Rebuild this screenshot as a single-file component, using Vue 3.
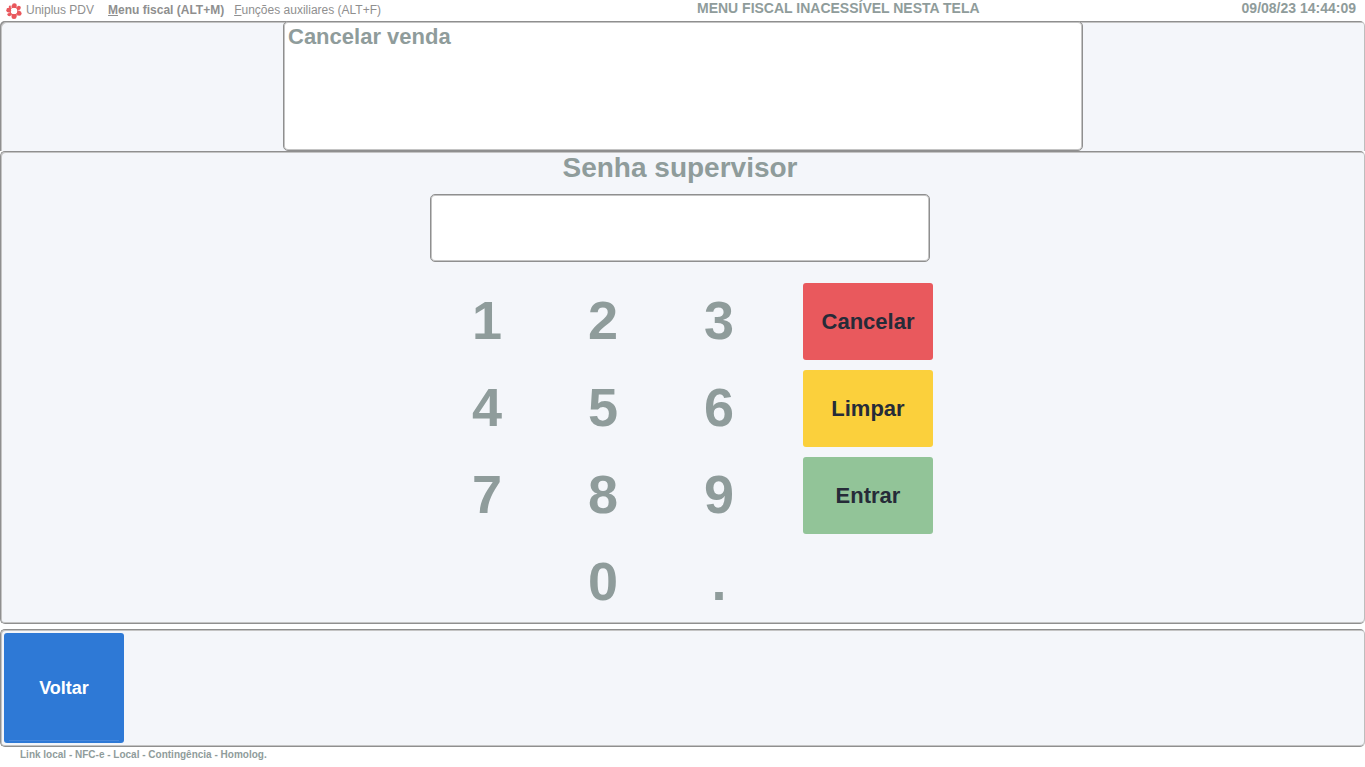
<script setup>
import { ref } from 'vue'

const password = ref('')
const keys = ['1', '2', '3', '4', '5', '6', '7', '8', '9', '0', '.']

function press(key) {
  password.value += key
}

function clear() {
  password.value = ''
}
</script>

<template>
  <div class="page">
    <header class="topbar">
      <nav class="menu">
        <svg class="logo" viewBox="0 0 16 16" aria-hidden="true">
          <circle cx="8" cy="8" r="4.6" fill="none" stroke="#e9575c" stroke-width="2.6" />
          <g fill="#e9575c">
            <circle cx="8.4" cy="2.6" r="2.4" />
            <circle cx="12.8" cy="4.8" r="2" />
            <circle cx="13.2" cy="10.4" r="2.4" />
            <circle cx="8" cy="13.4" r="2.5" />
            <circle cx="3.4" cy="11.2" r="2" />
            <circle cx="2.7" cy="7.2" r="2.4" />
            <circle cx="4.2" cy="3.8" r="1.4" />
          </g>
          <path
            d="M5.4 5.2 5 1.8M10.8 4.4l.6-2.8M12.2 7.4l3.4.2M10.8 11.6l1 2.8M5.4 11.8l-.8 2.8M3.6 9.6l-3 .6"
            stroke="#ffffff"
            stroke-width="0.7"
          />
        </svg>
        <span class="brand">Uniplus PDV</span>
        <a class="item strong" href="#"><u>M</u>enu fiscal (ALT+M)</a>
        <a class="item" href="#"><u>F</u>unções auxiliares (ALT+F)</a>
      </nav>
      <span class="notice">MENU FISCAL INACESSÍVEL NESTA TELA</span>
      <time class="clock" datetime="2023-08-09T14:44:09">09/08/23 14:44:09</time>
    </header>

    <section class="panel head">
      <h1 class="title">Cancelar venda</h1>
    </section>

    <main class="panel body">
      <label class="label" for="password">Senha supervisor</label>
      <input id="password" v-model="password" class="field" type="password" />
      <div class="pad">
        <div class="keys">
          <button
            v-for="key in keys"
            :key="key"
            type="button"
            class="key"
            :class="{ second: key === '0' }"
            @click="press(key)"
          >{{ key }}</button>
        </div>
        <div class="actions">
          <button type="button" class="action cancel">Cancelar</button>
          <button type="button" class="action clear" @click="clear">Limpar</button>
          <button type="button" class="action enter">Entrar</button>
        </div>
      </div>
    </main>

    <section class="panel foot">
      <button type="button" class="back">Voltar</button>
    </section>

    <footer class="status">Link local - NFC-e - Local - Contingência - Homolog.</footer>
  </div>
</template>

<style>
body {
  margin: 0;
  background: #ffffff;
}
</style>

<style scoped>
.page {
  display: flex;
  flex-direction: column;
  min-height: 100vh;
  font-family: "Liberation Sans", Arial, sans-serif;
  color: #8f9c9b;
}

.page *,
.page *::after {
  box-sizing: border-box;
}

button {
  padding: 0;
  border: 0;
  font-family: inherit;
  font-weight: bold;
  cursor: pointer;
}

.topbar {
  display: grid;
  grid-template-columns: auto 1fr auto;
  height: 21px;
  padding: 0 9px 0 6px;
}

.menu {
  display: flex;
  align-items: center;
  font-size: 12px;
  line-height: 21px;
  color: #8f8f8f;
  white-space: nowrap;
}

.logo {
  width: 16px;
  height: 16px;
  margin-right: 4px;
}

.brand {
  margin-right: 4px;
}

.item {
  margin-right: 10px;
  margin-left: 0;
  color: inherit;
  text-decoration: none;
}

.brand + .item {
  margin-left: 10px;
}

.strong {
  font-weight: bold;
}

.notice,
.clock {
  font-size: 14px;
  font-weight: bold;
  line-height: 16px;
}

.notice {
  padding-left: 44px;
  text-align: center;
}

.panel {
  border: 1px solid #8f8f8f;
  border-right-color: #bdbdbd;
  border-radius: 5px;
  background: #f4f6fa;
  box-shadow: inset 1px 1px 0 #c4c4c4, inset 0 -1px 0 #c4c4c4;
}

.head {
  height: 130px;
  padding-left: 2px;
  border-width: 0 1px 0 0;
  border-radius: 5px 5px 0 0;
  box-shadow: inset 1px 1px 0 #8f8f8f, inset 2px 2px 0 #c4c4c4;
}

.title {
  width: 800px;
  max-width: 100%;
  height: 130px;
  margin: 0 auto;
  padding: 2px 4px;
  border: 1px solid #8f8f8f;
  border-radius: 5px;
  background: #ffffff;
  box-shadow: inset 0 0 0 1px #c4c4c4;
  font-size: 22px;
  line-height: 26px;
}

.body {
  display: flex;
  flex: 1;
  flex-direction: column;
  align-items: center;
  padding: 0 5px 0 0;
}

.label {
  font-size: 28px;
  font-weight: bold;
  line-height: 32px;
}

.field {
  width: 500px;
  max-width: 100%;
  height: 68px;
  margin: 10px 0 21px;
  padding: 0 12px;
  border: 1px solid #8f8f8f;
  border-radius: 5px;
  background: #ffffff;
  box-shadow: inset 0 0 0 1px #c4c4c4;
  font-size: 28px;
  color: inherit;
  outline: 0;
}

.pad {
  display: flex;
  justify-content: flex-end;
  gap: 31px;
  width: 506px;
}

.keys {
  display: grid;
  grid-template-columns: repeat(3, 106px);
  grid-auto-rows: 77px;
  gap: 10px;
}

.key {
  padding-bottom: 4px;
  background: transparent;
  font-size: 54px;
  color: #8f9c9b;
}

.second {
  grid-column: 2;
}

.actions {
  display: flex;
  flex-direction: column;
  gap: 10px;
}

.action {
  width: 130px;
  height: 77px;
  border-radius: 3px;
  font-size: 22px;
  color: #262b38;
}

.cancel {
  background: #e9595d;
}

.clear {
  background: #fbd03c;
}

.enter {
  background: #92c498;
}

.foot {
  height: 118px;
  margin-top: 5px;
  padding: 3px;
}

.back {
  position: relative;
  width: 120px;
  height: 110px;
  border-radius: 3px;
  background: #2e79d6;
  font-size: 18px;
  color: #ffffff;
}

.back::after {
  content: "";
  position: absolute;
  right: 5px;
  bottom: 2px;
  left: 5px;
  height: 1px;
  background: #4888dc;
}

.status {
  height: 20px;
  padding-left: 20px;
  font-size: 10px;
  font-weight: bold;
  line-height: 16px;
}
</style>
